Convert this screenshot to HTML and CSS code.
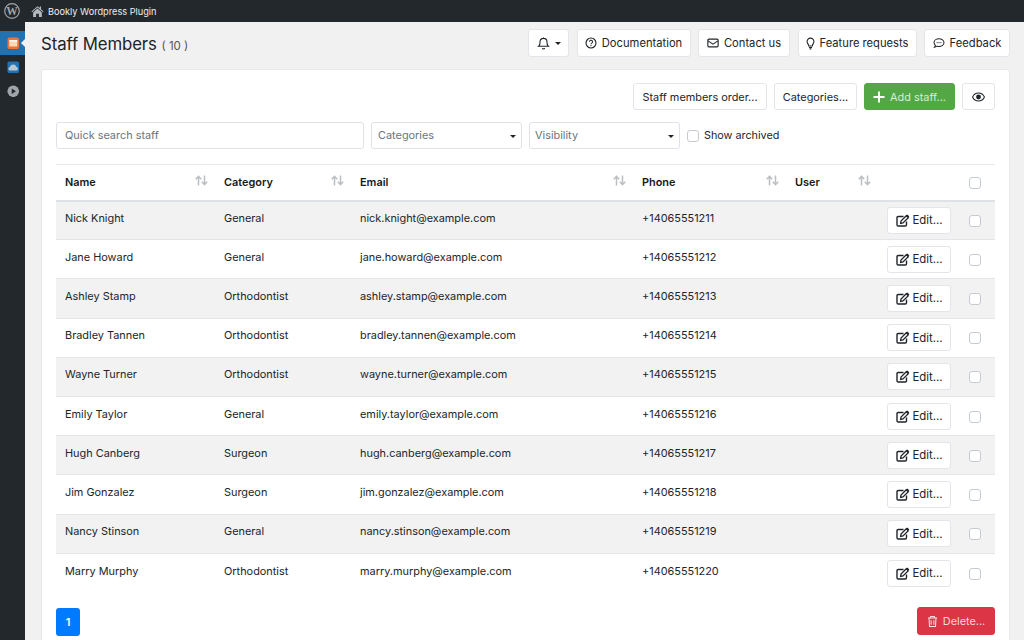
FILE: index.html
```html
<!DOCTYPE html>
<html lang="en">
<head>
<meta charset="utf-8">
<title>Staff Members</title>
<link rel="stylesheet" href="styles.css">
</head>
<body>
<svg class="defs" width="0" height="0" aria-hidden="true">
  <symbol id="sort" viewBox="0 0 13 11"><path d="M3.500 10.500V1.500M.8 4.300l2.700-3 2.700 3M9.500.5v9M6.800 6.700l2.700 3 2.700-3" fill="none" stroke="currentColor" stroke-width="1.500"/></symbol>
  <symbol id="edit" viewBox="0 0 14 13"><path d="M10.500 7.500v3.300a1.200 1.200 0 0 1-1.200 1.200H2.200A1.200 1.200 0 0 1 1 10.800V3.700a1.200 1.200 0 0 1 1.200-1.200h5.300" fill="none" stroke="currentColor" stroke-width="1.400"/><path d="M5 7l-.4 2.400L7 9l5.300-5.300-2-2z M11 1l1.900 1.900" fill="none" stroke="currentColor" stroke-width="1.300"/></symbol>
</svg>
<header class="topbar">
  <svg class="wp" viewBox="0 0 16 16"><circle cx="8" cy="8" r="7.300" fill="none" stroke="#a0a5aa" stroke-width="1.200"/><text x="8" y="12" text-anchor="middle" class="wp-w">W</text></svg>
  <svg class="home" viewBox="0 0 14 13"><path d="M7 .8L.5 6.500l.7.8L7 2.300l5.800 5 .7-.8L10.800 4V1.200H9.400v1.600z" fill="#b4b9be"/><path d="M2.300 7.500L7 3.400l4.700 4.100v5H8.500V9h-3v3.500H2.300z" fill="#b4b9be"/></svg>
  <span class="site">Bookly Wordpress Plugin</span>
</header>
<div class="shell">
  <nav class="side">
    <div class="side-item active">
      <svg viewBox="0 0 14 14" class="sicon"><rect x=".5" y=".5" width="13" height="13" rx="2.500" fill="#f0743a"/><rect x="2.500" y="3.500" width="9" height="7" rx="1" fill="#fbd9b5"/><rect x="2.500" y="3.500" width="9" height="1.500" fill="#fff"/></svg>
    </div>
    <div class="side-item">
      <svg viewBox="0 0 14 14" class="sicon"><rect x=".5" y=".5" width="13" height="13" rx="2" fill="#2271b1"/><path d="M3 10.500a2 2 0 0 1 .3-3.900 3.800 3.800 0 0 1 7.300 0 2 2 0 0 1 .3 3.900z" fill="#b9c6d2"/></svg>
    </div>
    <div class="side-item">
      <svg viewBox="0 0 14 14" class="sicon"><circle cx="7" cy="7" r="6.500" fill="#a0a5aa"/><path d="M5.300 3.800L10 7l-4.700 3.200z" fill="#23282d"/></svg>
    </div>
  </nav>
  <main class="content">
    <div class="title-row">
      <h1 class="title">Staff Members <span class="count">( 10 )</span></h1>
      <div class="top-actions">
        <button class="btn btn-bell"><svg class="ico" viewBox="0 0 14 14"><path d="M7 1.500a3.700 3.700 0 0 0-3.700 3.700c0 3.700-1.500 4.800-1.500 4.800h10.400s-1.500-1.100-1.500-4.800A3.700 3.700 0 0 0 7 1.500zM5.700 12a1.400 1.400 0 0 0 2.600 0M7 .5v1" fill="none" stroke="currentColor" stroke-width="1.200"/></svg><i class="caret"></i></button>
        <button class="btn btn-top w-doc"><svg class="ico" viewBox="0 0 14 14"><circle cx="7" cy="7" r="5.800" fill="none" stroke="currentColor" stroke-width="1.300"/><path d="M5.200 5.600a1.800 1.800 0 1 1 2.700 1.500c-.6.400-.9.700-.9 1.300" fill="none" stroke="currentColor" stroke-width="1.200"/><circle cx="7" cy="10" r=".8" fill="currentColor"/></svg>Documentation</button>
        <button class="btn btn-top w-contact"><svg class="ico" viewBox="0 0 14 14"><rect x="1" y="2.500" width="12" height="9" rx="1.200" fill="none" stroke="currentColor" stroke-width="1.300"/><path d="M1.300 4.500L7 8.300l5.700-3.800" fill="none" stroke="currentColor" stroke-width="1.300"/></svg>Contact us</button>
        <button class="btn btn-top w-feature"><svg class="ico ico-n" viewBox="0 0 10 14"><path d="M5 1a3.800 3.800 0 0 0-3.800 3.800c0 2 1.800 3.200 1.800 5h4c0-1.800 1.800-3 1.800-5A3.800 3.800 0 0 0 5 1zM3.300 11.500h3.400M4 13h2" fill="none" stroke="currentColor" stroke-width="1.200"/></svg>Feature requests</button>
        <button class="btn btn-top w-feedback"><svg class="ico" viewBox="0 0 14 14"><path d="M7 2c3.200 0 5.800 2 5.800 4.500S10.200 11 7 11c-.8 0-1.500-.1-2.200-.3-.7.5-1.800 1.100-3.100 1.100.6-.6 1-1.400 1.100-2C1.900 9 1.200 7.800 1.200 6.500 1.200 4 3.800 2 7 2z" fill="none" stroke="currentColor" stroke-width="1.200"/><circle cx="4.800" cy="6.500" r=".7" fill="currentColor"/><circle cx="7" cy="6.500" r=".7" fill="currentColor"/><circle cx="9.200" cy="6.500" r=".7" fill="currentColor"/></svg>Feedback</button>
      </div>
    </div>
    <section class="card">
      <div class="card-actions">
        <button class="btn w-order">Staff members order...</button>
        <button class="btn w-cats">Categories...</button>
        <button class="btn btn-green w-add"><svg class="ico" viewBox="0 0 12 12"><path d="M6 .5v11M.5 6h11" stroke="#fff" stroke-width="2"/></svg>Add staff...</button>
        <button class="btn btn-eye"><svg class="eye" viewBox="0 0 16 12"><path d="M8 1C4.500 1 1.800 3.500.7 6c1.100 2.500 3.800 5 7.300 5s6.200-2.500 7.300-5C14.200 3.500 11.500 1 8 1z" fill="none" stroke="currentColor" stroke-width="1.300"/><circle cx="8" cy="6" r="3" fill="currentColor"/></svg></button>
      </div>
      <div class="filters">
        <div class="field field-search">Quick search staff</div>
        <div class="field field-cat">Categories<i class="caret small"></i></div>
        <div class="field field-vis">Visibility<i class="caret small"></i></div>
        <label class="archived"><span class="check"></span>Show archived</label>
      </div>
      <table class="grid">
        <colgroup><col class="c1"><col class="c2"><col class="c3"><col class="c4"><col class="c5"><col class="c6"><col class="c7"></colgroup>
        <thead>
          <tr>
            <th><div class="th-in">Name<svg class="sort"><use href="#sort"/></svg></div></th>
            <th><div class="th-in">Category<svg class="sort"><use href="#sort"/></svg></div></th>
            <th><div class="th-in">Email<svg class="sort"><use href="#sort"/></svg></div></th>
            <th><div class="th-in">Phone<svg class="sort"><use href="#sort"/></svg></div></th>
            <th><div class="th-in">User<svg class="sort"><use href="#sort"/></svg></div></th>
            <th></th>
            <th class="cell-check"><span class="check"></span></th>
          </tr>
        </thead>
        <tbody id="rows">
          <tr><td>Nick Knight</td><td>General</td><td>nick.knight@example.com</td><td>+14065551211</td><td></td><td class="cell-edit"><button class="btn btn-edit"><svg class="ico-edit"><use href="#edit"/></svg>Edit...</button></td><td class="cell-check"><span class="check"></span></td></tr>
          <tr><td>Jane Howard</td><td>General</td><td>jane.howard@example.com</td><td>+14065551212</td><td></td><td class="cell-edit"><button class="btn btn-edit"><svg class="ico-edit"><use href="#edit"/></svg>Edit...</button></td><td class="cell-check"><span class="check"></span></td></tr>
          <tr><td>Ashley Stamp</td><td>Orthodontist</td><td>ashley.stamp@example.com</td><td>+14065551213</td><td></td><td class="cell-edit"><button class="btn btn-edit"><svg class="ico-edit"><use href="#edit"/></svg>Edit...</button></td><td class="cell-check"><span class="check"></span></td></tr>
          <tr><td>Bradley Tannen</td><td>Orthodontist</td><td>bradley.tannen@example.com</td><td>+14065551214</td><td></td><td class="cell-edit"><button class="btn btn-edit"><svg class="ico-edit"><use href="#edit"/></svg>Edit...</button></td><td class="cell-check"><span class="check"></span></td></tr>
          <tr><td>Wayne Turner</td><td>Orthodontist</td><td>wayne.turner@example.com</td><td>+14065551215</td><td></td><td class="cell-edit"><button class="btn btn-edit"><svg class="ico-edit"><use href="#edit"/></svg>Edit...</button></td><td class="cell-check"><span class="check"></span></td></tr>
          <tr><td>Emily Taylor</td><td>General</td><td>emily.taylor@example.com</td><td>+14065551216</td><td></td><td class="cell-edit"><button class="btn btn-edit"><svg class="ico-edit"><use href="#edit"/></svg>Edit...</button></td><td class="cell-check"><span class="check"></span></td></tr>
          <tr><td>Hugh Canberg</td><td>Surgeon</td><td>hugh.canberg@example.com</td><td>+14065551217</td><td></td><td class="cell-edit"><button class="btn btn-edit"><svg class="ico-edit"><use href="#edit"/></svg>Edit...</button></td><td class="cell-check"><span class="check"></span></td></tr>
          <tr><td>Jim Gonzalez</td><td>Surgeon</td><td>jim.gonzalez@example.com</td><td>+14065551218</td><td></td><td class="cell-edit"><button class="btn btn-edit"><svg class="ico-edit"><use href="#edit"/></svg>Edit...</button></td><td class="cell-check"><span class="check"></span></td></tr>
          <tr><td>Nancy Stinson</td><td>General</td><td>nancy.stinson@example.com</td><td>+14065551219</td><td></td><td class="cell-edit"><button class="btn btn-edit"><svg class="ico-edit"><use href="#edit"/></svg>Edit...</button></td><td class="cell-check"><span class="check"></span></td></tr>
          <tr><td>Marry Murphy</td><td>Orthodontist</td><td>marry.murphy@example.com</td><td>+14065551220</td><td></td><td class="cell-edit"><button class="btn btn-edit"><svg class="ico-edit"><use href="#edit"/></svg>Edit...</button></td><td class="cell-check"><span class="check"></span></td></tr>
        </tbody>
      </table>
      <div class="card-foot">
        <span class="page">1</span>
        <button class="btn btn-red"><svg class="ico ico-trash" viewBox="0 0 12 14"><path d="M1 3.200h10M4 3V1.500h4V3M2.200 3.200l.5 9.300h6.600l.5-9.300M4.500 5.500v5M7.500 5.500v5" fill="none" stroke="#fbe3e5" stroke-width="1.100"/></svg>Delete...</button>
      </div>
    </section>
  </main>
</div>
</body>
</html>
```
FILE: styles.css
```css
* { box-sizing: border-box; }
html, body { margin: 0; height: 640px; overflow: hidden; }
body { font-family: Inter, "Liberation Sans", sans-serif; font-size: 11px; color: #212529; background: #f1f1f1; }
.defs { display: block; height: 0; }
.topbar { height: 22px; background: #23282d; display: flex; align-items: center; color: #eee; }
.wp { width: 16px; height: 16px; margin-left: 4px; }
.wp-w { font-family: "Liberation Serif", serif; font-size: 11.500px; font-weight: 700; fill: #a0a5aa; }
.home { width: 13px; height: 13px; margin-left: 11px; }
.site { margin-left: 4px; font-size: 9.200px; color: #eee; }
.shell { display: flex; height: 618px; }
.side { width: 25px; background: #23282d; padding-top: 9px; flex: none; }
.side-item { height: 24px; display: flex; align-items: center; padding-left: 7px; position: relative; }
.side-item.active { background: #2271b1; }
.side-item.active::after { content: ""; position: absolute; right: 0; top: 7.500px; border: 4.500px solid transparent; border-right-color: #f1f1f1; border-left-width: 0; }
.sicon { width: 12.500px; height: 12.500px; }
.content { flex: 1; padding: 7px 14px 0 16px; min-width: 0; }
.title-row { display: flex; align-items: center; justify-content: space-between; height: 28px; margin-bottom: 12px; }
.title { margin: 2px 0 0; font-size: 16.800px; font-weight: 400; color: #1d2327; letter-spacing: -.1px; }
.count { font-size: 11.500px; font-weight: 400; color: #555; letter-spacing: 0; }
.top-actions { display: flex; gap: 7.500px; }
.btn { display: inline-flex; align-items: center; justify-content: center; height: 27px; padding: 0 8px; background: #fff; border: 1px solid #e2e5e9; border-radius: 3px; font: 400 10.900px Inter, "Liberation Sans", sans-serif; color: #212529; white-space: nowrap; }
.btn-top { font-size: 11.200px; height: 28px; padding-bottom: 0; }
.ico { width: 12px; height: 12px; margin-right: 5px; flex: none; }
.ico-n { width: 9px; height: 13px; }
.ico-trash { width: 11px; height: 13px; margin-right: 5px; }
.btn-bell { width: 41px; height: 28px; padding: 0; }
.btn-bell .ico { width: 13px; height: 13px; margin-right: 5px; }
.w-doc { width: 114px; }
.w-contact { width: 92px; }
.w-feature { width: 119px; }
.w-feedback { width: 86px; }
.w-order { width: 134px; }
.w-cats { width: 83px; }
.w-add { width: 91px; }
.caret { display: inline-block; border: 3.500px solid transparent; border-top-color: #212529; border-bottom-width: 0; }
.caret.small { border-width: 3px 3px 0; position: absolute; right: 5px; top: 12px; }
.card { background: #fff; border: 1px solid #e6e7e8; border-radius: 3px; height: 580px; padding: 13px 14px 0; }
.card-actions { display: flex; justify-content: flex-end; gap: 7px; height: 28px; }
.btn-green { background: #53a845; border-color: #53a845; color: #d8eed4; }
.btn-eye { width: 33px; padding: 0; }
.eye { width: 13px; height: 10px; }
.filters { display: flex; align-items: center; gap: 7px; margin-top: 11px; height: 27px; }
.field { height: 27px; border: 1px solid #dfe2e6; border-radius: 3px; padding: 0 0 1px 8px; display: flex; align-items: center; color: #6c757d; font-size: 10.900px; position: relative; background: #fff; }
.field-search { width: 308px; }
.field-cat { width: 151px; padding-left: 6px; }
.field-vis { width: 151px; padding-left: 5px; }
.archived { display: flex; align-items: center; gap: 5px; color: #212529; font-size: 10.800px; }
.check { display: block; width: 12px; height: 12px; border: 1px solid #c6cbd1; border-radius: 3px; background: #fff; }
.grid { width: 939px; table-layout: fixed; border-collapse: collapse; margin-top: 15px; font-size: 10.900px; }
.c1 { width: 159px; } .c2 { width: 136px; } .c3 { width: 282px; } .c4 { width: 153px; } .c5 { width: 92px; } .c6 { width: 73px; } .c7 { width: 44px; }
.grid th { height: 36px; border-top: 1px solid #e8eaec; border-bottom: 2px solid #dee2e6; padding: 0 0 0 9px; text-align: left; font-weight: 600; color: #16191c; vertical-align: middle; }
.th-in { display: flex; align-items: center; justify-content: space-between; padding-right: 7px; }
.sort { width: 13px; height: 11px; color: #bcbfc2; margin-top: -3px; }
.grid td { height: 39.200px; border-bottom: 1px solid #e3e5e8; padding: 0 0 5px 9px; vertical-align: middle; white-space: nowrap; }
.grid tbody tr:nth-child(odd) td { background: #f2f2f2; }
.grid tbody tr:last-child td { border-bottom: 0; }
.grid td.cell-edit { padding: 0; text-align: right; font-size: 0; }
.grid td.cell-check, .grid th.cell-check { padding: 1px 0 0 18px; }
.btn-edit { width: 64px; padding: 0 0 0 1px; vertical-align: middle; font-size: 11.400px; }
.ico-edit { width: 14px; height: 13px; margin-right: 2px; }
.card-foot { display: flex; align-items: flex-start; justify-content: space-between; margin-top: 15px; }
.page { width: 24px; height: 28px; margin-top: 1px; border-radius: 3px; background: #007bff; color: #fff; font-weight: 600; font-size: 11px; display: flex; align-items: center; justify-content: center; }
.btn-red { width: 78px; height: 28px; background: #dc3545; border-color: #dc3545; color: #f6d5d9; padding: 0; }
```
